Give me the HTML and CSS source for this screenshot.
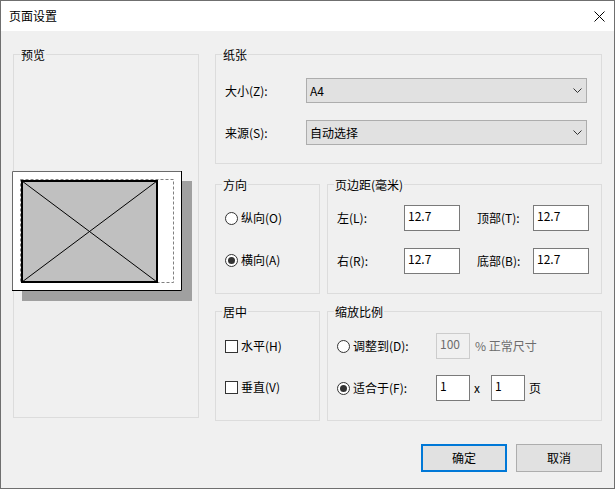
FILE: index.html
```html
<!DOCTYPE html>
<html lang="zh-CN">
<head>
<meta charset="utf-8">
<title>页面设置</title>
<link rel="stylesheet" href="styles.css">
</head>
<body>
<div class="window">
  <div class="titlebar">
    <span class="title">页面设置</span>
    <svg class="close" width="11" height="11" viewBox="0 0 11 11"><path d="M0.5 0.5L10.5 10.5M10.5 0.5L0.5 10.5" stroke="#000" stroke-width="1" fill="none"/></svg>
  </div>
  <div class="body">
    <div class="main">
      <fieldset class="group preview">
        <legend>预览</legend>
        <svg class="sheet" width="180" height="130" viewBox="0 0 180 130">
          <rect x="10" y="10" width="170" height="120" fill="#a0a0a0"/>
          <rect x="0" y="0" width="170" height="120" fill="#fff"/>
          <path d="M0.5 120V0.5H170" stroke="#6a6a6a" fill="none"/>
          <path d="M169.5 0V119.5H0" stroke="#000" fill="none"/>
          <rect x="8.5" y="8.5" width="153" height="103" fill="none" stroke="#808080" stroke-dasharray="3 2"/>
          <rect x="9" y="9" width="137" height="103" fill="#c0c0c0"/>
          <rect x="10" y="10" width="135" height="101" fill="none" stroke="#000" stroke-width="2"/>
          <path d="M10 10L145 111M145 10L10 111" stroke="#000" stroke-width="1" fill="none"/>
        </svg>
      </fieldset>
      <div class="rightcol">
        <fieldset class="group paper">
          <legend>纸张</legend>
          <div class="prow">
            <span class="plabel">大小(Z):</span>
            <div class="combo"><span>A4</span><svg class="chev" width="9" height="5" viewBox="0 0 9 5"><path d="M0.5 0.5L4.5 4.5L8.5 0.5" stroke="#333" fill="none"/></svg></div>
          </div>
          <div class="prow">
            <span class="plabel">来源(S):</span>
            <div class="combo"><span>自动选择</span><svg class="chev" width="9" height="5" viewBox="0 0 9 5"><path d="M0.5 0.5L4.5 4.5L8.5 0.5" stroke="#333" fill="none"/></svg></div>
          </div>
        </fieldset>
        <div class="pair pair-mid">
          <fieldset class="group narrow orient">
            <legend>方向</legend>
            <div class="opt"><span class="radio"></span><span>纵向(O)</span></div>
            <div class="opt"><span class="radio checked"></span><span>横向(A)</span></div>
          </fieldset>
          <fieldset class="group wide margins">
            <legend>页边距(毫米)</legend>
            <div class="mrow">
              <span class="mlabel">左(L):</span>
              <div class="field">12.7</div>
              <span class="mlabel2">顶部(T):</span>
              <div class="field">12.7</div>
            </div>
            <div class="mrow">
              <span class="mlabel">右(R):</span>
              <div class="field">12.7</div>
              <span class="mlabel2">底部(B):</span>
              <div class="field">12.7</div>
            </div>
          </fieldset>
        </div>
        <div class="pair pair-bot">
          <fieldset class="group narrow center">
            <legend>居中</legend>
            <div class="opt opt-check"><span class="check"></span><span>水平(H)</span></div>
            <div class="opt opt-check"><span class="check"></span><span>垂直(V)</span></div>
          </fieldset>
          <fieldset class="group wide scale">
            <legend>缩放比例</legend>
            <div class="srow">
              <div class="sopt"><span class="radio"></span><span>调整到(D):</span></div>
              <div class="field small disabled">100</div>
              <span class="note">% 正常尺寸</span>
            </div>
            <div class="srow">
              <div class="sopt"><span class="radio checked"></span><span>适合于(F):</span></div>
              <div class="field small">1</div>
              <span class="times">x</span>
              <div class="field small">1</div>
              <span class="page">页</span>
            </div>
          </fieldset>
        </div>
      </div>
    </div>
    <div class="buttons">
      <div class="btn default">确定</div>
      <div class="btn">取消</div>
    </div>
  </div>
</div>
</body>
</html>
```
FILE: styles.css
```css
* { box-sizing: border-box; }
html, body { margin: 0; padding: 0; }
body {
  width: 615px;
  height: 489px;
  overflow: hidden;
  background: #f0f0f0;
  font-family: "Noto Sans CJK SC", sans-serif;
  font-size: 12px;
  color: #000;
}
.window {
  width: 615px;
  height: 489px;
  border: 1px solid #6f6f6f;
  background: #f0f0f0;
  display: flex;
  flex-direction: column;
}
.titlebar {
  flex: none;
  height: 30px;
  background: #fff;
  display: flex;
  align-items: center;
  justify-content: space-between;
  padding: 0 9px 0 8px;
}
.title { line-height: 16px; }
.close { display: block; }
.body {
  padding: 16px 12px 0 12px;
  display: flex;
  flex-direction: column;
}
.main { display: flex; gap: 16px; }
.group {
  margin: 0;
  padding: 0;
  border: 1px solid #dcdcdc;
  min-width: 0;
}
.group legend {
  padding: 0 1px;
  margin-left: -3px;
  line-height: 15px;
  font-size: 12px;
}
.preview legend { margin-left: 6px; }
.preview { width: 186px; height: 371px; }
.sheet { display: block; margin: 109px 0 0 -2px; }
.rightcol { width: 387px; display: flex; flex-direction: column; }
.paper {
  height: 117px;
  padding: 16px 0 0 9px;
  display: flex;
  flex-direction: column;
  gap: 17px;
}
.prow { display: flex; align-items: center; }
.plabel { width: 81px; line-height: 16px; }
.combo {
  width: 281px;
  height: 25px;
  border: 1px solid #adadad;
  background: #e1e1e1;
  display: flex;
  align-items: center;
  justify-content: space-between;
  padding: 0 4px 0 3px;
  line-height: 16px;
}
.chev { display: block; }
.pair { display: flex; gap: 7px; height: 117px; }
.pair-mid { margin-top: 13px; }
.pair-bot { margin-top: 10px; }
.narrow { width: 105px; }
.wide { width: 275px; }
.orient {
  padding: 16px 0 0 9px;
  display: flex;
  flex-direction: column;
  gap: 22px;
}
.opt { display: flex; align-items: center; height: 20px; gap: 3px; line-height: 16px; }
.radio {
  width: 13px;
  height: 13px;
  border: 1px solid #333;
  border-radius: 50%;
  background: #fff;
  display: flex;
  align-items: center;
  justify-content: center;
  flex: none;
}
.radio.checked::after {
  content: "";
  width: 7px;
  height: 7px;
  border-radius: 50%;
  background: #333;
}
.check {
  width: 13px;
  height: 13px;
  border: 1px solid #333;
  background: #fff;
  flex: none;
}
.margins {
  padding: 13px 0 0 9px;
  display: flex;
  flex-direction: column;
  gap: 17px;
}
.mrow { display: flex; align-items: center; line-height: 16px; }
.mlabel { width: 67px; }
.mlabel2 { width: 56px; margin-left: 17px; }
.field {
  width: 56px;
  height: 26px;
  border: 1px solid #7a7a7a;
  background: #fff;
  padding: 1px 0 0 3px;
  line-height: 17px;
  flex: none;
}
.field.small { width: 34px; }
.field.disabled { border-color: #cccccc; background: #f0f0f0; color: #6d6d6d; }
.center {
  padding: 17px 0 0 9px;
  display: flex;
  flex-direction: column;
  gap: 21px;
}
.opt-check { gap: 3px; }
.scale {
  padding: 14px 0 0 9px;
  display: flex;
  flex-direction: column;
  gap: 16px;
}
.srow { display: flex; align-items: center; line-height: 16px; }
.sopt { width: 99px; display: flex; align-items: center; gap: 3px; }
.note { margin-left: 5px; color: #6d6d6d; }
.times { width: 21px; padding-left: 4px; }
.page { margin-left: 4px; }
.buttons {
  margin-top: 23px;
  display: flex;
  justify-content: flex-end;
  gap: 9px;
}
.btn {
  width: 86px;
  height: 28px;
  border: 1px solid #adadad;
  background: #e1e1e1;
  display: flex;
  align-items: center;
  justify-content: center;
  line-height: 16px;
}
.btn.default { border: 2px solid #0078d7; }
```
